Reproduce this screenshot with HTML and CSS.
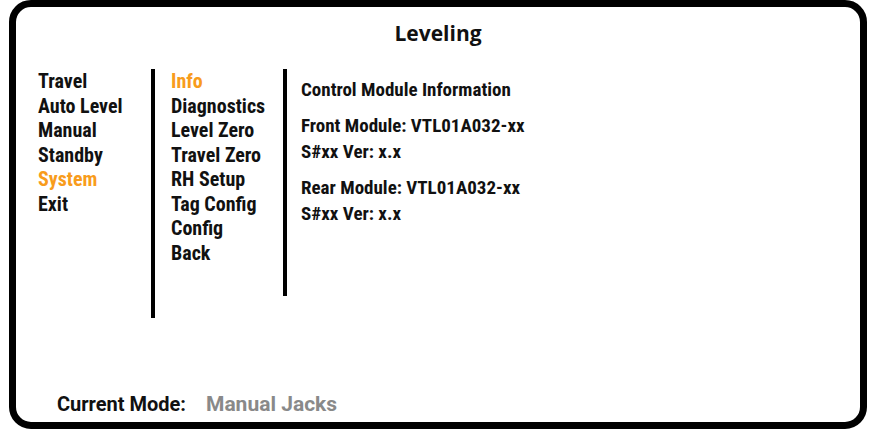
FILE: index.html
```html
<!DOCTYPE html>
<html lang="en">

<head>
    <meta charset="UTF-8">
    <meta name="viewport" content="width=device-width, initial-scale=1.0">
    <title>Leveling</title>
    <link rel="stylesheet" href="styles.css">
</head>

<body>
    <div id="frame">
        <div class="title">Leveling</div>
        <div id="menus">
            <div class="col main">
                <div class="item">Travel</div>
                <div class="item">Auto Level</div>
                <div class="item">Manual</div>
                <div class="item">Standby</div>
                <div class="item active">System</div>
                <div class="item">Exit</div>
            </div>
            <div class="col sub">
                <div class="item active">Info</div>
                <div class="item">Diagnostics</div>
                <div class="item">Level Zero</div>
                <div class="item">Travel Zero</div>
                <div class="item">RH Setup</div>
                <div class="item">Tag Config</div>
                <div class="item">Config</div>
                <div class="item">Back</div>
            </div>
            <div class="col info">
                <div class="heading">Control Module Information</div>
                <div class="group">
                    <div>Front Module: VTL01A032-xx</div>
                    <div>S#xx Ver: x.x</div>
                </div>
                <div class="group">
                    <div>Rear Module: VTL01A032-xx</div>
                    <div>S#xx Ver: x.x</div>
                </div>
            </div>
        </div>
        <div class="status">
            <span class="label">Current Mode:</span>
            <span class="mode">Manual Jacks</span>
        </div>
    </div>
</body>

</html>
```

FILE: styles.css
```css
html, body {
    margin: 0;
    height: 100%;
    background-color: #ffffff;
    color: #111111;
    font-family: "Roboto Condensed", "Liberation Sans Narrow", "DejaVu Sans Condensed", sans-serif;
    font-weight: bold;
}

#frame {
    box-sizing: border-box;
    margin-left: 9px;
    width: 858px;
    height: 429px;
    border: 7px solid #000;
    border-radius: 22px;
    display: flex;
    flex-direction: column;
}

.title {
    font-family: "Open Sans", sans-serif;
    font-size: 21px;
    text-align: center;
    padding-top: 12px;
    height: 62px;
    box-sizing: border-box;
}

#menus {
    display: flex;
    align-items: flex-start;
    padding-left: 22px;
    flex: 1;
}

.item {
    font-size: 20px;
    line-height: 24.5px;
}

.active {
    color: #f89c1c; /* highlighted entry */
}

.main {
    width: 113px;
}

.sub {
    border-left: 4px solid #000;
    height: 249px;
    padding-left: 16px;
    width: 112px;
}

.info {
    border-left: 4px solid #000;
    height: 227px;
    padding-left: 14px;
    font-size: 19px;
    line-height: 26px;
    padding-top: 8px;
    box-sizing: border-box;
}

.group {
    margin-top: 10px;
}

.status {
    font-family: Roboto, sans-serif;
    font-size: 20px;
    padding-left: 41px;
    padding-bottom: 6px;
    display: flex;
    align-items: baseline;
    gap: 20px;
}

.mode {
    color: #898989;
    font-size: 21px;
}
```
